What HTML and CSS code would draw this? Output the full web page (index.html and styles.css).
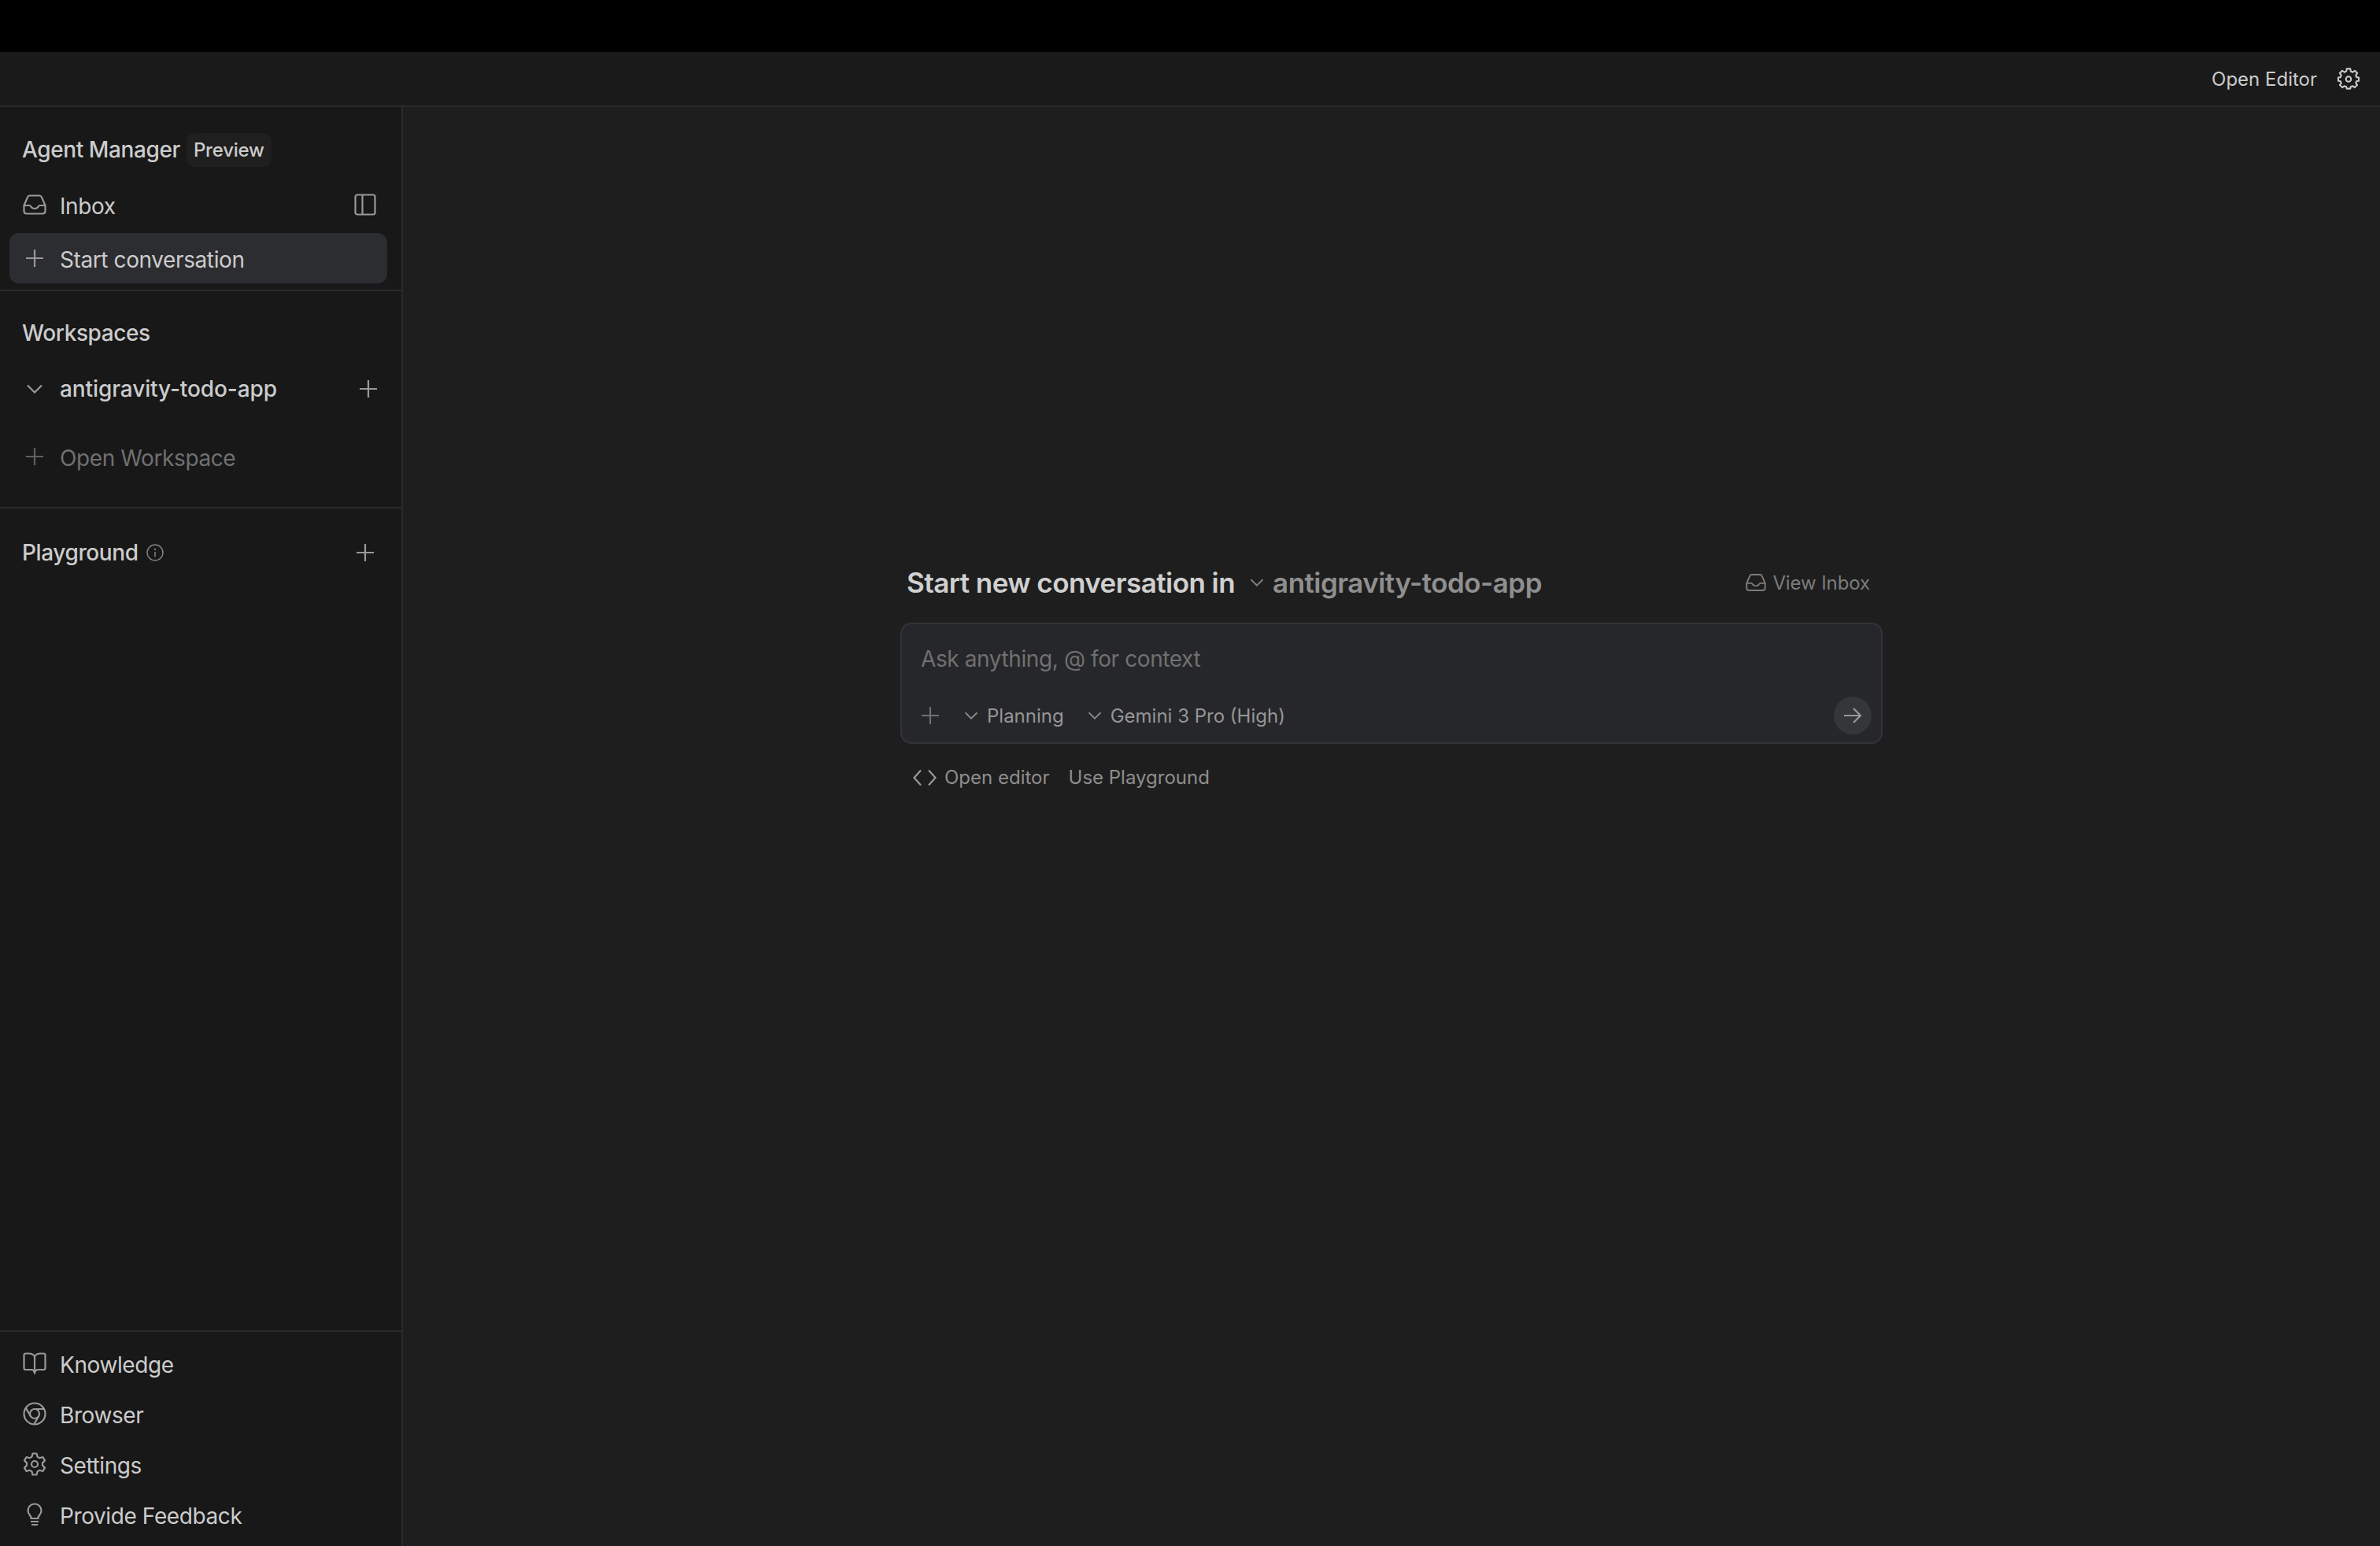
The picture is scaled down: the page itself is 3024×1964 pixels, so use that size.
FILE: index.html
```html
<!DOCTYPE html>
<html lang="en">
<head>
  <meta charset="UTF-8" />
  <title>Agent Manager</title>
  <link rel="stylesheet" href="styles.css">
</head>
<body>
  <svg class="defs" width="0" height="0">
    <symbol id="i-inbox" viewBox="0 0 30 26"><path d="M1.500 14 6 3.600C6.500 2.300 7.500 1.500 9 1.500H21C22.500 1.500 23.500 2.300 24 3.600L28.500 14V21C28.500 23.200 27.200 24.500 25 24.500H5C2.800 24.500 1.500 23.200 1.500 21ZM1.500 14H8C9.500 14 10 14.800 10.600 15.800 11.300 17 12.500 18 15 18S18.700 17 19.400 15.800C20 14.800 20.500 14 22 14H28.500"/></symbol>
    <symbol id="i-panel" viewBox="0 0 28 28"><rect x="1.500" y="1.500" width="25" height="25" rx="2.500"/><path d="M10.500 1.500V26.500"/></symbol>
    <symbol id="i-plus" viewBox="0 0 22 22"><path d="M11 0V22M0 11H22"/></symbol>
    <symbol id="i-chevron" viewBox="0 0 20 12"><path d="M1 1.500 10 10.500 19 1.500"/></symbol>
    <symbol id="i-info" viewBox="0 0 22 22"><circle cx="11" cy="11" r="10"/><path d="M11 10V16.500"/><circle class="dot" cx="11" cy="6.800" r="1.100"/></symbol>
    <symbol id="i-book" viewBox="0 0 30 28"><path d="M15 5C13.500 2.800 11 1.500 8 1.500H3.500C2.300 1.500 1.500 2.300 1.500 3.500V20C1.500 21.200 2.300 22 3.500 22H11C13 22 14 22.800 15 26 16 22.800 17 22 19 22H26.500C27.700 22 28.500 21.200 28.500 20V3.500C28.500 2.300 27.700 1.500 26.500 1.500H22C19 1.500 16.500 2.800 15 5ZM15 5V25"/></symbol>
    <symbol id="i-chrome" viewBox="0 0 30 30"><circle cx="15" cy="15" r="13.500"/><circle cx="15" cy="15" r="6"/><path d="M15 9H27M9.800 18 3.800 7.600M20.200 18 14.200 28.400"/></symbol>
    <symbol id="i-gear" viewBox="0 0 28 30"><path d="M11.500 1.500H16.500L17.500 5.600 20.300 7.200 24.400 6 27 10.400 24 13.400V16.600L27 19.600 24.400 24 20.300 22.800 17.500 24.400 16.500 28.500H11.500L10.500 24.400 7.700 22.800 3.600 24 1 19.600 4 16.600V13.400L1 10.400 3.600 6 7.700 7.200 10.500 5.600Z" stroke-linejoin="round"/><circle cx="14" cy="15" r="4"/></symbol>
    <symbol id="i-cog" viewBox="0 0 30 30"><path d="M12.500 1.500H17.500L18 5 20.700 6.100 23.600 4 27 7.400 24.900 10.300 26 13 29 13.500V18L25.800 18.500 24.900 20.700 26.800 23.500 23.400 26.900 20.700 25 18 26 17.500 28.500H12.500L12 26 9.300 25 6.600 26.900 3.200 23.500 5.100 20.700 4.200 18.500 1 18V13.500L4 13 5.100 10.300 3 7.400 6.400 4 9.300 6.100 12 5Z" stroke-linejoin="round"/><circle cx="15" cy="15.500" r="3.500"/></symbol>
    <symbol id="i-bulb" viewBox="0 0 20 30"><path d="M5.500 18.500C5 16.500 1.500 14.500 1.500 10 1.500 5.200 5.200 1.500 10 1.500S18.500 5.200 18.500 10C18.500 14.500 15 16.500 14.500 18.500V20H5.500ZM5 24H15M6 28H14"/></symbol>
    <symbol id="i-code" viewBox="0 0 30 22"><path d="M10 1.500 1.500 11 10 20.500M20 1.500 28.500 11 20 20.500"/></symbol>
    <symbol id="i-arrow" viewBox="0 0 22 22"><path d="M0 11H21M12 2 21 11 12 20"/></symbol>
  </svg>

  <div class="window-strip"></div>

  <header class="topbar">
    <span class="topbar-link">Open Editor</span>
    <svg class="icon cog"><use href="#i-cog"/></svg>
  </header>

  <div class="app">
    <aside class="sidebar">
      <section class="side-top">
        <div class="side-title">
          <span>Agent Manager</span>
          <span class="badge">Preview</span>
        </div>
        <div class="nav-row">
          <span class="nav-icon"><svg class="icon inbox"><use href="#i-inbox"/></svg></span>
          <span class="nav-label">Inbox</span>
          <svg class="icon panel"><use href="#i-panel"/></svg>
        </div>
        <div class="nav-row active">
          <span class="nav-icon"><svg class="icon plus"><use href="#i-plus"/></svg></span>
          <span class="nav-label">Start conversation</span>
        </div>
      </section>

      <section class="side-workspaces">
        <div class="side-title">Workspaces</div>
        <div class="nav-row project">
          <span class="nav-icon"><svg class="icon chevron"><use href="#i-chevron"/></svg></span>
          <span class="nav-label strong">antigravity-todo-app</span>
          <svg class="icon plus"><use href="#i-plus"/></svg>
        </div>
        <div class="nav-row open-workspace">
          <span class="nav-icon"><svg class="icon plus"><use href="#i-plus"/></svg></span>
          <span class="nav-label">Open Workspace</span>
        </div>
      </section>

      <section class="side-playground">
        <span class="strong">Playground</span>
        <svg class="icon info"><use href="#i-info"/></svg>
        <svg class="icon plus"><use href="#i-plus"/></svg>
      </section>

      <section class="side-bottom">
        <div class="nav-row">
          <span class="nav-icon"><svg class="icon inbox"><use href="#i-book"/></svg></span>
          <span class="nav-label">Knowledge</span>
        </div>
        <div class="nav-row">
          <span class="nav-icon"><svg class="icon round"><use href="#i-chrome"/></svg></span>
          <span class="nav-label">Browser</span>
        </div>
        <div class="nav-row">
          <span class="nav-icon"><svg class="icon round"><use href="#i-gear"/></svg></span>
          <span class="nav-label">Settings</span>
        </div>
        <div class="nav-row">
          <span class="nav-icon"><svg class="icon round"><use href="#i-bulb"/></svg></span>
          <span class="nav-label">Provide Feedback</span>
        </div>
      </section>
    </aside>

    <main class="main">
      <div class="composer-wrap">
        <div class="composer-head">
          <span class="head-title">Start new conversation in</span>
          <svg class="icon chevron small"><use href="#i-chevron"/></svg>
          <span class="head-project">antigravity-todo-app</span>
          <span class="view-inbox">
            <svg class="icon inbox-small"><use href="#i-inbox"/></svg>
            View Inbox
          </span>
        </div>

        <div class="composer">
          <div class="composer-input">Ask anything, @ for context</div>
          <div class="composer-tools">
            <svg class="icon plus"><use href="#i-plus"/></svg>
            <span class="tool first">
              <svg class="icon chevron small"><use href="#i-chevron"/></svg>Planning
            </span>
            <span class="tool">
              <svg class="icon chevron small"><use href="#i-chevron"/></svg>Gemini 3 Pro (High)
            </span>
            <span class="send"><svg class="icon arrow"><use href="#i-arrow"/></svg></span>
          </div>
        </div>

        <div class="composer-links">
          <span class="link"><svg class="icon code"><use href="#i-code"/></svg>Open editor</span>
          <span class="link">Use Playground</span>
        </div>
      </div>
    </main>
  </div>
</body>
</html>
```

FILE: styles.css
```css
:root {
  --sidebar: #181818;
  --main: #1e1e1e;
  --line: #2a2a2c;
  --text: #cccccc;
  --icon: #999999;
  --muted: #707070;
}

* {
  box-sizing: border-box;
}

html, body {
  height: 100%;
}

body {
  margin: 0;
  display: flex;
  flex-direction: column;
  overflow: hidden;
  background: var(--main);
  color: var(--text);
  font-family: Inter, 'Liberation Sans', sans-serif;
  font-size: 28px;
}

.defs {
  position: absolute;
}

.icon {
  display: block;
  flex: none;
  fill: none;
  stroke: var(--icon);
  stroke-width: 2.2;
}

.dot {
  fill: var(--icon);
  stroke: none;
}

.window-strip {
  height: 66px;
  background: #000;
}

.topbar {
  height: 70px;
  display: flex;
  align-items: center;
  justify-content: flex-end;
  gap: 26px;
  padding-right: 26px;
  background: #1a1a1a;
  border-bottom: 2px solid var(--line);
}

.topbar-link {
  font-size: 24px;
}

.cog {
  width: 28px;
  height: 28px;
  stroke: var(--text);
}

.app {
  flex: 1;
  display: flex;
  min-height: 0;
}

.sidebar {
  width: 512px;
  display: flex;
  flex-direction: column;
  background: var(--sidebar);
  border-right: 2px solid var(--line);
  letter-spacing: -0.4px;
}

.side-top {
  padding: 24px 0 8px;
  border-bottom: 2px solid var(--line);
}

.side-title {
  height: 60px;
  display: flex;
  align-items: center;
  gap: 8px;
  padding: 0 28px;
  font-weight: 500;
}

.side-top .side-title {
  margin-bottom: 10px;
}

.badge {
  padding: 7px 9px;
  background: #1f1f1f;
  border-radius: 10px;
  font-size: 24px;
  letter-spacing: -0.2px;
}

.nav-row {
  height: 64px;
  display: flex;
  align-items: center;
  gap: 16px;
  margin: 0 18px 0 12px;
  padding: 0 16px;
  border-radius: 12px;
}

.side-top .nav-row + .nav-row {
  margin-top: 2px;
}

.nav-row.active {
  padding-top: 4px;
  background: #2c2d30;
}

.nav-icon {
  width: 32px;
  display: flex;
  justify-content: center;
  margin-bottom: 4px;
}

.nav-label {
  flex: 1;
}

.strong {
  font-weight: 500;
}

.nav-row.project .nav-label {
  letter-spacing: -0.1px;
}

.nav-row.project .nav-icon {
  margin-bottom: 0;
}

.inbox {
  width: 30px;
  height: 28px;
}

.panel {
  width: 28px;
  height: 28px;
  margin: 0 -2px 4px 0;
}

.plus {
  width: 22px;
  height: 22px;
}

.chevron {
  width: 20px;
  height: 12px;
}

.chevron.small {
  width: 14px;
  height: 9px;
}

.round {
  width: 30px;
  height: 30px;
}

.side-workspaces {
  padding: 23px 0 30px;
  border-bottom: 2px solid var(--line);
}

.side-workspaces .side-title {
  margin-bottom: 9px;
}

.nav-row.project .plus {
  margin-right: -3px;
}

.nav-row.open-workspace {
  margin-top: 24px;
  color: var(--muted);
}

.open-workspace .plus {
  stroke: #606060;
}

.side-playground {
  height: 60px;
  margin-top: 26px;
  display: flex;
  align-items: center;
  padding: 0 35px 0 28px;
}

.info {
  width: 22px;
  height: 22px;
  margin-left: 10px;
  stroke: #808080;
  stroke-width: 1.500;
}

.side-playground .plus {
  margin-left: auto;
}

.side-bottom {
  margin-top: auto;
  padding: 10px 0 6px;
  border-top: 2px solid var(--line);
}

.main {
  flex: 1;
  display: flex;
  justify-content: center;
  padding-top: 580px;
  background: var(--main);
}

.composer-wrap {
  width: 1248px;
}

.composer-head {
  height: 48px;
  display: flex;
  align-items: center;
  padding: 0 16px 0 8px;
  margin-bottom: 27px;
  font-size: 35px;
  font-weight: 600;
  letter-spacing: -0.55px;
}

.head-title {
  color: #d0d0d0;
}

.composer-head .chevron {
  margin: 0 11px 0 19px;
  stroke: #808080;
  width: 18px;
  height: 10px;
}

.head-project {
  color: #8f8f8f;
}

.view-inbox {
  margin-left: auto;
  display: flex;
  align-items: center;
  gap: 8px;
  color: #7c7c7c;
  font-size: 24px;
  font-weight: 400;
  letter-spacing: -0.1px;
}

.inbox-small {
  width: 26px;
  height: 24px;
  stroke: #7c7c7c;
}

.composer {
  height: 154px;
  padding: 0 12px 0 24px;
  background: #26272a;
  border: 2px solid #333438;
  border-radius: 14px;
}

.composer-input {
  height: 92px;
  display: flex;
  align-items: center;
  padding-bottom: 4px;
  color: var(--muted);
  letter-spacing: -0.4px;
}

.composer-tools {
  height: 48px;
  display: flex;
  align-items: center;
  color: #969696;
  font-size: 24px;
}

.composer-tools .plus {
  stroke: #707070;
  margin-left: 1px;
}

.tool {
  display: flex;
  align-items: center;
  gap: 11px;
  margin-left: 30px;
}

.tool.first {
  margin-left: 32px;
}

.tool .chevron {
  width: 18px;
  height: 10px;
  stroke: #888;
}

.send {
  width: 48px;
  height: 48px;
  margin-left: auto;
  display: flex;
  align-items: center;
  justify-content: center;
  background: #35363a;
  border-radius: 50%;
}

.arrow {
  width: 22px;
  height: 22px;
}

.composer-links {
  display: flex;
  align-items: center;
  gap: 24px;
  margin-top: 28px;
  padding-left: 16px;
  color: #8e8e8e;
  font-size: 24px;
}

.link {
  display: flex;
  align-items: center;
  gap: 10px;
}

.code {
  width: 30px;
  height: 22px;
}
```
